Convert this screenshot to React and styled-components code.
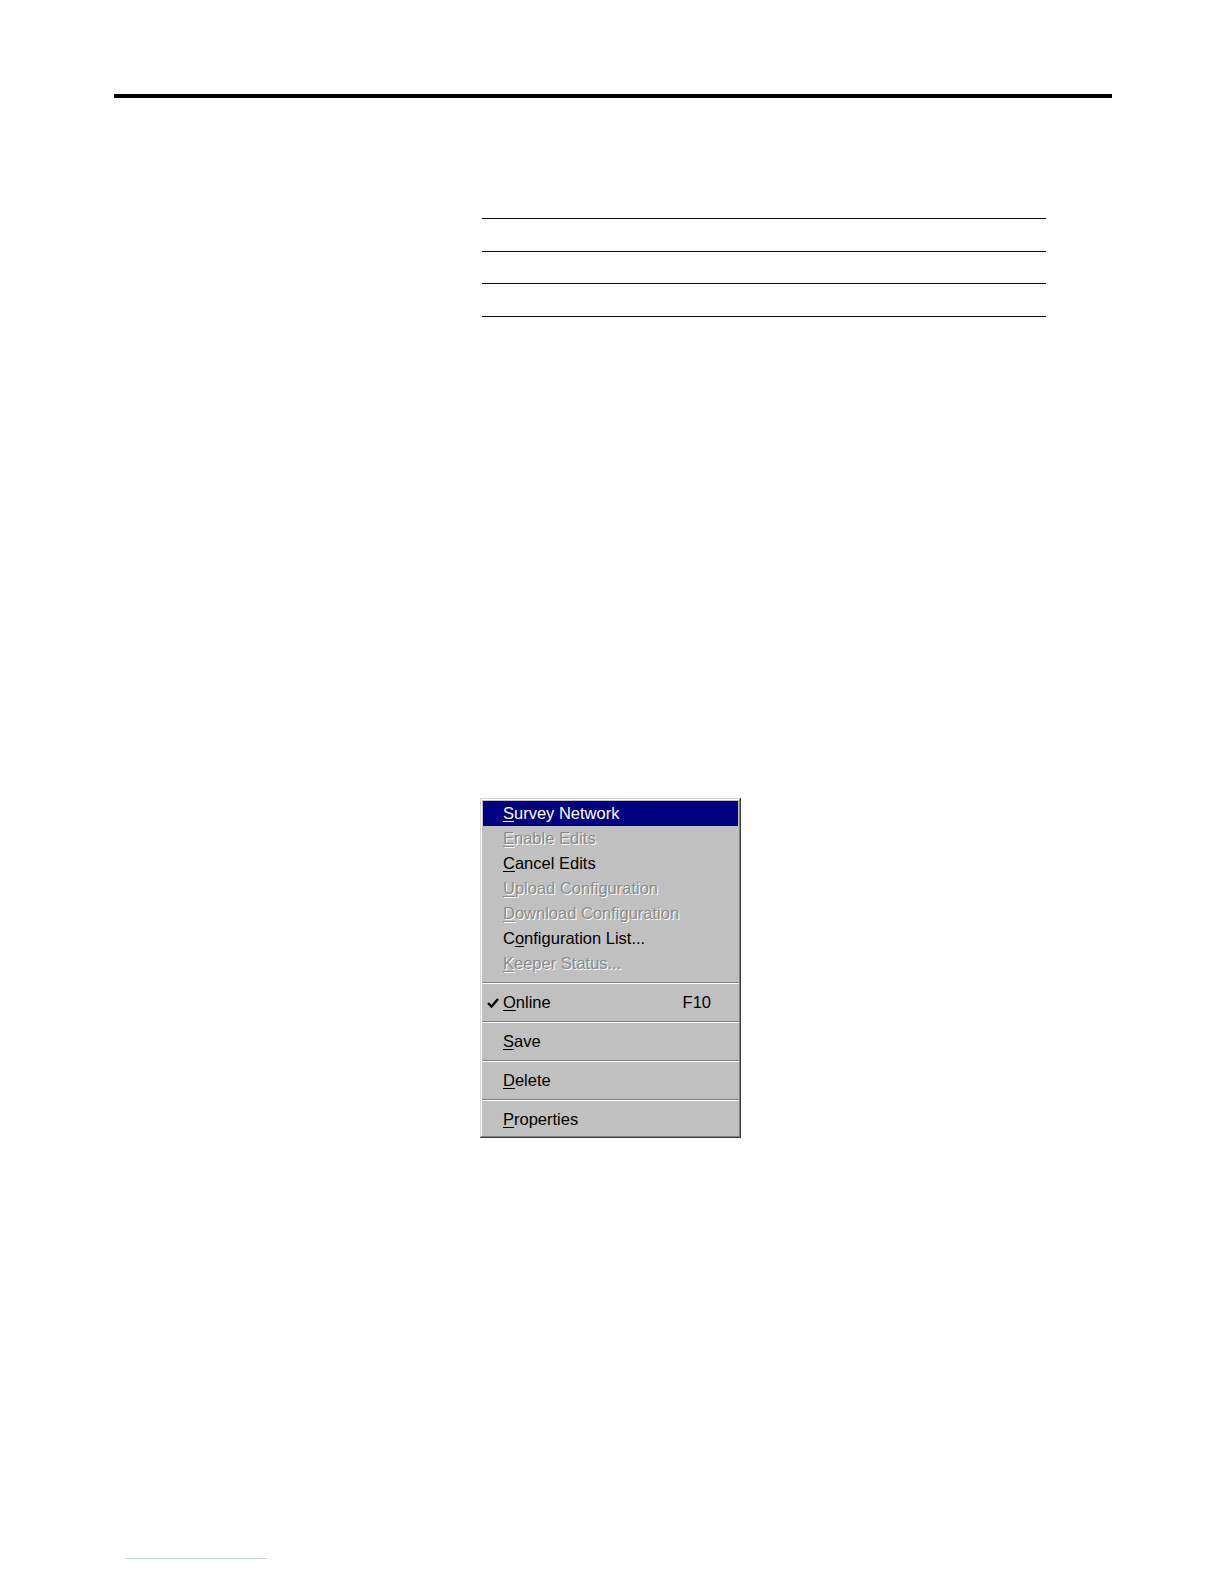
import React from 'react'
import styled, { createGlobalStyle } from 'styled-components'

const GlobalStyle = createGlobalStyle`
    html, body {
        margin: 0;
        padding: 0;
        background: #fff;
        overflow: hidden;
        font-family: "Liberation Sans", Arial, sans-serif;
    }
`;

const Page = styled.div`
    position: relative;
    width: 100%;
    height: 1570px;
    background: #fff;
    display: flex;
    flex-direction: column;
`;

const TopRule = styled.div`
    margin: 94px 0 0 114px;
    width: 998px;
    height: 4px;
    background: #000;
`;

const RuleTable = styled.div`
    margin: 120px 0 0 482px;
    width: 564px;
    display: flex;
    flex-direction: column;
`;

const TableRow = styled.div`
    height: 31.5px;
    border-top: 1.5px solid #111;
    &:last-child {
        height: 0;
    }
`;

const Menu = styled.ul`
    list-style: none;
    margin: 481px 0 0 480px;
    padding: 3px 3px 6px 3px;
    width: 255px;
    background: #c0c0c0;
    box-shadow:
        inset -1px -1px 0 #404040,
        inset 1px 1px 0 #d4d4d4,
        inset -2px -2px 0 #808080,
        inset 2px 2px 0 #ffffff;
    font-family: "Liberation Sans", Arial, sans-serif;
    font-size: 16.5px;
`;

const Item = styled.li`
    position: relative;
    height: 25px;
    display: flex;
    align-items: center;
    padding: 0 27px 0 20px;
    background: ${(p) => (p.$active ? '#000080' : 'transparent')};
    color: ${(p) => (p.$active ? '#fff' : p.$disabled ? '#8c8c8c' : '#000')};
    text-shadow: ${(p) => (p.$disabled ? '1px 1px 0 #fff' : 'none')};
`;

const Label = styled.span`
    flex: 1;
    u {
        text-decoration: underline;
        text-underline-offset: 2px;
    }
`;

const Shortcut = styled.span``;

const Check = styled.svg`
    position: absolute;
    left: 4px;
    top: 8px;
`;

const Separator = styled.li`
    height: 14px;
    display: flex;
    flex-direction: column;
    justify-content: center;
    &::before {
        content: '';
        display: block;
        height: 1px;
        margin: 0 -1px;
        background: #808080;
    }
    &::after {
        content: '';
        display: block;
        height: 1px;
        margin: 0 -1px;
        background: #fff;
    }
`;

const FooterLink = styled.div`
    position: absolute;
    left: 125px;
    top: 1558px;
    width: 142px;
    height: 1px;
    background: #c8d2ec;
`;

const items = [
    { key: 'S', rest: 'urvey Network', active: true },
    { key: 'E', rest: 'nable Edits', disabled: true },
    { key: 'C', rest: 'ancel Edits' },
    { key: 'U', rest: 'pload Configuration', disabled: true },
    { key: 'D', rest: 'ownload Configuration', disabled: true },
    { pre: 'C', key: 'o', rest: 'nfiguration List...' },
    { key: 'K', rest: 'eeper Status...', disabled: true },
    'sep',
    { key: 'O', rest: 'nline', checked: true, shortcut: 'F10' },
    'sep',
    { key: 'S', rest: 'ave' },
    'sep',
    { key: 'D', rest: 'elete' },
    'sep',
    { key: 'P', rest: 'roperties' },
];

const App = () => {
    return (
        <Page>
            <GlobalStyle />
            <TopRule />
            <RuleTable>
                <TableRow />
                <TableRow />
                <TableRow />
                <TableRow />
            </RuleTable>
            <Menu>
                {items.map((it, i) =>
                    it === 'sep' ? (
                        <Separator key={i} />
                    ) : (
                        <Item key={i} $active={it.active} $disabled={it.disabled}>
                            {it.checked && (
                                <Check width="12" height="10" viewBox="0 0 12 10">
                                    <path d="M1 5 L4.5 8.5 L11 1" stroke="#000" strokeWidth="2.4" fill="none" />
                                </Check>
                            )}
                            <Label>
                                {it.pre}
                                <u>{it.key}</u>
                                {it.rest}
                            </Label>
                            {it.shortcut && <Shortcut>{it.shortcut}</Shortcut>}
                        </Item>
                    )
                )}
            </Menu>
            <FooterLink />
        </Page>
    );
}

export default App;
